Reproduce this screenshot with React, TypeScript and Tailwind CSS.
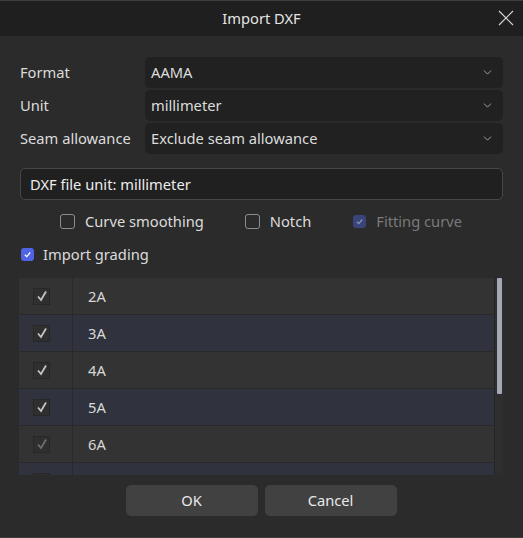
import { ChevronDown } from 'lucide-react';

const font = { fontFamily: '"Noto Sans", "Open Sans", sans-serif' };

const combos = [
  { label: 'Format', value: 'AAMA' },
  { label: 'Unit', value: 'millimeter' },
  { label: 'Seam allowance', value: 'Exclude seam allowance' },
];

const sizes = [
  { name: '2A', dim: false },
  { name: '3A', dim: false },
  { name: '4A', dim: false },
  { name: '5A', dim: false },
  { name: '6A', dim: true },
  { name: '', dim: false },
];

function Tick({ className }: { className: string }) {
  return (
    <svg width="12" height="12" viewBox="0 0 12 12" className={className}>
      <path d="M2 6.5 L5 10 L10 1.5" fill="none" stroke="currentColor" strokeWidth="1.8" />
    </svg>
  );
}

function Box({ checked, disabled }: { checked?: boolean; disabled?: boolean }) {
  if (checked) {
    return (
      <span
        className={`w-[13px] h-[13px] rounded-[3px] flex items-center justify-center ${
          disabled ? 'bg-[#39447a]' : 'bg-[#4f63e6]'
        }`}
      >
        <svg width="9" height="9" viewBox="0 0 10 10">
          <path
            d="M2 5.2 L4.2 7.4 L8 2.8"
            fill="none"
            stroke={disabled ? '#8a93b8' : '#ffffff'}
            strokeWidth="1.4"
          />
        </svg>
      </span>
    );
  }
  return <span className="w-[15px] h-[15px] rounded-[3px] border border-[#8c8c8c]" />;
}

export default function App() {
  return (
    <div
      className="w-[523px] h-[538px] bg-[#2b2b2b] border-t border-b border-[#3d3d3d] flex flex-col text-[14.7px] text-[#dcdcdc]"
      style={font}
    >
      {/* Title bar */}
      <div className="h-[35px] bg-[#1f1f1f] relative flex items-center justify-center text-[#e4e4e4]">
        <span>Import DXF</span>
        <svg
          width="16"
          height="16"
          viewBox="0 0 16 16"
          className="absolute right-[9px] top-[9px] text-[#d4d4d4]"
        >
          <path d="M1 1 L15 15 M15 1 L1 15" stroke="currentColor" strokeWidth="1.2" fill="none" />
        </svg>
      </div>

      <div className="px-[20px] pt-[21px] flex flex-col">
        {/* Combo rows */}
        <div className="flex flex-col gap-[2px]">
          {combos.map((c) => (
            <div key={c.label} className="flex items-center h-[31px]">
              <span className="w-[125px] shrink-0">{c.label}</span>
              <div className="flex-1 h-full bg-[#212121] rounded-[5px] flex items-center justify-between pl-[6px] pr-[9px]">
                <span>{c.value}</span>
                <ChevronDown size={13} strokeWidth={1.5} className="text-[#bdbdbd]" />
              </div>
            </div>
          ))}
        </div>

        {/* Info field */}
        <div className="mt-[14px] h-[32px] bg-[#202020] border border-[#474747] rounded-[5px] flex items-center pl-[9px] text-[#ececec]">
          DXF file unit: millimeter
        </div>

        {/* Options */}
        <div className="mt-[11px] h-[20px] flex items-center pl-[40px]">
          <label className="flex items-center gap-[10px]">
            <Box />
            <span>Curve smoothing</span>
          </label>
          <label className="flex items-center gap-[10px] ml-[41px]">
            <Box />
            <span>Notch</span>
          </label>
          <label className="flex items-center gap-[10px] ml-[42px]">
            <Box checked disabled />
            <span className="text-[#7a7a7a]">Fitting curve</span>
          </label>
        </div>

        <label className="mt-[13px] h-[20px] flex items-center gap-[9px] pl-[1px]">
          <Box checked />
          <span>Import grading</span>
        </label>

        {/* Grading table */}
        <div className="mt-[14px] h-[197px] flex -mx-[1px]">
          <div className="w-[475px] overflow-hidden bg-[#303030]">
            {sizes.map((s, i) => (
              <div
                key={i}
                className={`h-[37px] flex border-b border-[#292929] ${
                  i % 2 === 0 ? 'bg-[#333333]' : 'bg-[#30333d]'
                }`}
              >
                <div className="w-[54px] shrink-0 border-r border-[#292929] flex items-center pl-[14px]">
                  <span className="w-[17px] h-[17px] border border-[#272727] bg-[#2f2f2f] flex items-center justify-center">
                    <Tick className={s.dim ? 'text-[#6e6e6e]' : 'text-[#c4c4c4]'} />
                  </span>
                </div>
                <div className="flex items-center pl-[15px] text-[#d8d8d8]">{s.name}</div>
              </div>
            ))}
          </div>
          <div className="w-[9px] bg-[#2e2e2e] border-l border-[#262626] pl-[2px]">
            <div className="w-[5px] h-[116px] bg-[#a6a8b8] rounded-[1px]" />
          </div>
        </div>

        {/* Buttons */}
        <div className="mt-[10px] flex justify-center gap-[7px] -ml-[1px]">
          <button className="w-[132px] h-[31px] bg-[#414141] rounded-[5px] text-[#e8e8e8]">OK</button>
          <button className="w-[132px] h-[31px] bg-[#414141] rounded-[5px] text-[#e8e8e8]">Cancel</button>
        </div>
      </div>
    </div>
  );
}
